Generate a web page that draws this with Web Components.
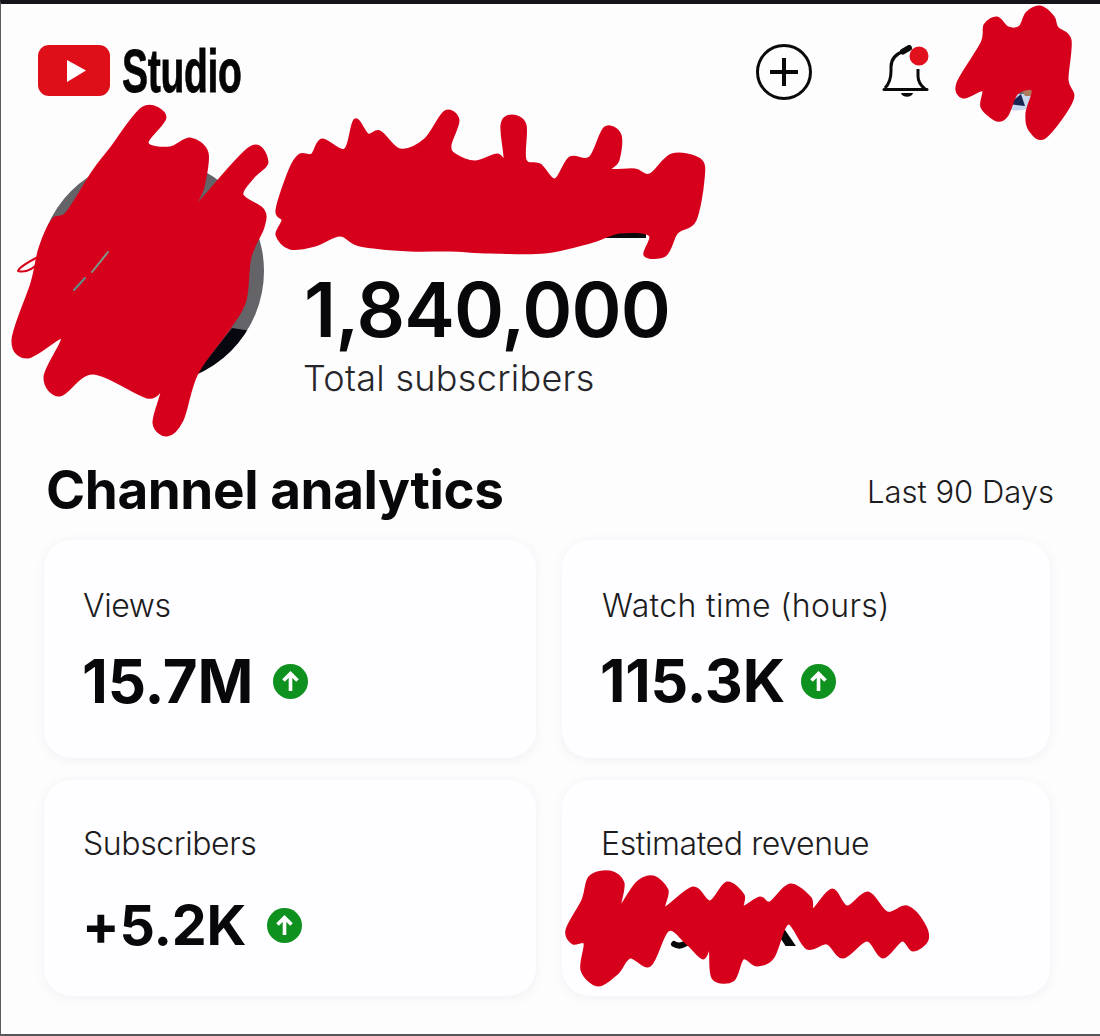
<!DOCTYPE html>
<html lang="en">
<head>
<meta charset="utf-8">
<title>YouTube Studio</title>
<style>
  html, body { margin: 0; background: #fefdfe; }
  body { font-family: Inter, "Liberation Sans", sans-serif; color: #0a0a0c; }
  .lower { --pad-top: 42px; --value-gap: 23px; }
  .wide { --label-track: .35px; --label-left: 1px; }
</style>
</head>
<body>
<studio-app>
  <studio-header></studio-header>
  <channel-summary count="1,840,000" label="Total subscribers"></channel-summary>
  <analytics-panel heading="Channel analytics" range="Last 90 Days">
    <metric-card label="Views" value="15.7M" size="60" gap="20" trend></metric-card>
    <metric-card class="wide" label="Watch time (hours)" value="115.3K" size="59" gap="16" trend></metric-card>
    <metric-card class="lower" label="Subscribers" value="+5.2K" size="55.5" gap="21" trend></metric-card>
    <metric-card class="lower" label="Estimated revenue" value="K" size="59" covered></metric-card>
  </analytics-panel>
  <ink-overlay></ink-overlay>
</studio-app>

<script>
  class StudioApp extends HTMLElement {
    constructor() {
      super();
      this.attachShadow({ mode: 'open' });
      this.shadowRoot.innerHTML = `<style>
        :host {
          display: flex; flex-direction: column; position: relative;
          width: 1100px; height: 1036px; box-sizing: border-box; overflow: hidden;
          border-top: 4px solid #17151a; border-left: 1px solid #5c5c60;
          border-bottom: 2px solid #56565a; background: #fefdfe;
        }
      </style><slot></slot>`;
    }
  }

  class StudioHeader extends HTMLElement {
    constructor() {
      super();
      this.attachShadow({ mode: 'open' });
      this.shadowRoot.innerHTML = `<style>
        :host { display: flex; align-items: flex-start; height: 116px; padding: 41px 0 0 37px; box-sizing: border-box; }
        .logo { display: flex; width: 72px; height: 51px; flex: none; }
        .word {
          font: 700 62px/52px "Liberation Sans", sans-serif; color: #050505; margin-left: 12px;
          width: 120px; transform: scaleX(.63); transform-origin: 0 50%; letter-spacing: -.5px;
          -webkit-text-stroke: .8px #050505;
        }
        .actions { margin-left: auto; display: flex; align-items: flex-start; }
        .add { margin: -3px 0 0 0; }
        .bell { margin: 0 0 0 69px; }
        .avatar { margin: -11px 49px 0 49px; }
      </style>
      <svg class="logo" viewBox="0 0 72 51">
        <rect width="72" height="51" rx="11" fill="#df0f1a"/>
        <path d="M29 15 L48 25.500 L29 37 Z" fill="#fff"/>
      </svg>
      <span class="word">Studio</span>
      <div class="actions">
        <svg class="add" width="58" height="60" viewBox="0 0 58 60">
          <circle cx="29" cy="30" r="26.500" fill="none" stroke="#0a0a0a" stroke-width="3"/>
          <path d="M29 16 V44 M15 30 H43" stroke="#0a0a0a" stroke-width="4" fill="none"/>
        </svg>
        <svg class="bell" width="48" height="54" viewBox="0 0 48 54">
          <path d="M3 43 C8 38 9 33 9 26 V22 C9 14 14 9 21 6.500" fill="none" stroke="#0a0a0a" stroke-width="3"/>
          <path d="M21 6.500 L27 3" stroke="#0a0a0a" stroke-width="6" stroke-linecap="round" fill="none"/>
          <path d="M36 24 V31 C36 36 38 40 43 44" fill="none" stroke="#0a0a0a" stroke-width="3"/>
          <path d="M2 44.500 H45" stroke="#0a0a0a" stroke-width="3" stroke-linecap="round"/>
          <path d="M19 48 H31 C30 53 20 53 19 48 Z" fill="#0a0a0a"/>
          <circle cx="37" cy="11" r="9.500" fill="#e0101c"/>
        </svg>
        <svg class="avatar" width="72" height="80" viewBox="0 0 72 80">
          <circle cx="36" cy="42" r="33" fill="#6a6a6e"/>
          <path d="M22 74 L32 60 H52 L56 72 Q40 80 22 74 Z" fill="#c9d8ee"/>
          <path d="M30 70 L42 60 L46 72 Z" fill="#1a2450"/>
          <path d="M42 54 H60 L54 62 H46 Z" fill="#b07a5c"/>
        </svg>
      </div>`;
    }
  }

  class ChannelSummary extends HTMLElement {
    constructor() {
      super();
      this.attachShadow({ mode: 'open' });
      this.shadowRoot.innerHTML = `<style>
        :host { display: flex; align-items: flex-start; height: 326px; padding: 45px 0 0 36px; box-sizing: border-box; }
        .photo { flex: none; width: 228px; height: 228px; margin-top: -8px; }
        .info { display: flex; flex-direction: column; margin-left: 39px; }
        .name { width: 293px; height: 10px; margin: 63px 0 0 49px; background: #0a0a0c; }
        .count { font: 600 76px/80px Inter, "Liberation Sans", sans-serif; color: #08080a; margin-top: 31px; letter-spacing: -.9px; }
        .label { font: 300 36px/44px Inter, "Liberation Sans", sans-serif; color: #26262a; margin: 7px 0 0 -1px; letter-spacing: .3px; }
      </style>
      <svg class="photo" viewBox="0 0 228 228">
        <circle cx="114" cy="114" r="113" fill="#646367"/>
        <clipPath id="round"><circle cx="114" cy="114" r="113"/></clipPath>
        <path d="M150 228 L195 171 L228 176 V228 Z" fill="#07070f" clip-path="url(#round)"/>
      </svg>
      <div class="info">
        <div class="name"></div>
        <span class="count"></span>
        <span class="label"></span>
      </div>`;
      this.shadowRoot.querySelector('.count').textContent = this.getAttribute('count');
      this.shadowRoot.querySelector('.label').textContent = this.getAttribute('label');
    }
  }

  class AnalyticsPanel extends HTMLElement {
    constructor() {
      super();
      this.attachShadow({ mode: 'open' });
      this.shadowRoot.innerHTML = `<style>
        :host { display: block; padding: 0 46px 0 43px; }
        .head { display: flex; justify-content: space-between; align-items: flex-start; box-sizing: border-box; padding: 4px 0 0 2px; height: 94px; }
        h2 { margin: 0; font: 700 53px/80px Inter, "Liberation Sans", sans-serif; letter-spacing: -.4px; color: #08080a; }
        .range { font: 300 31px/40px Inter, "Liberation Sans", sans-serif; color: #1c1c20; margin-top: 22px; }
        .grid { display: grid; grid-template-columns: 492px 488px; grid-template-rows: 218px 216px; column-gap: 26px; row-gap: 22px; }
      </style>
      <div class="head"><h2></h2><span class="range"></span></div>
      <div class="grid"><slot></slot></div>`;
      this.shadowRoot.querySelector('h2').textContent = this.getAttribute('heading');
      this.shadowRoot.querySelector('.range').textContent = this.getAttribute('range');
    }
  }

  class MetricCard extends HTMLElement {
    constructor() {
      super();
      this.attachShadow({ mode: 'open' });
      this.shadowRoot.innerHTML = `<style>
        :host {
          display: flex; flex-direction: column; box-sizing: border-box;
          padding: var(--pad-top, 44px) 0 0 39px;
          background: #fefdff; border-radius: 28px;
          box-shadow: 0 2px 10px 2px rgba(60, 50, 80, .05);
        }
        .label {
          font: 300 32px/44px Inter, "Liberation Sans", sans-serif; color: #1c1c20;
          letter-spacing: var(--label-track, -.4px); margin-left: var(--label-left, 0);
        }
        .row { display: flex; align-items: center; margin: var(--value-gap, 17px) 0 0 -1px; height: 72px; }
        .value { font: 700 59px/72px Inter, "Liberation Sans", sans-serif; color: #08080a; letter-spacing: -.2px; }
      </style>
      <span class="label"></span>
      <div class="row"><span class="value"></span></div>`;
      const root = this.shadowRoot;
      root.querySelector('.label').textContent = this.getAttribute('label');
      const value = root.querySelector('.value');
      value.textContent = this.getAttribute('value');
      value.style.fontSize = this.getAttribute('size') + 'px';
      if (this.hasAttribute('trend')) {
        const badge = document.createElement('trend-badge');
        badge.style.marginLeft = this.getAttribute('gap') + 'px';
        root.querySelector('.row').appendChild(badge);
      }
      if (this.hasAttribute('covered')) {
        // only the tail of the figure shows from under the ink
        value.style.marginLeft = '155px';
      }
    }
  }

  class TrendBadge extends HTMLElement {
    constructor() {
      super();
      this.attachShadow({ mode: 'open' });
      this.shadowRoot.innerHTML = `<style>
        :host { display: inline-flex; width: 35px; height: 35px; }
      </style>
      <svg width="35" height="35" viewBox="0 0 35 35">
        <circle cx="17.500" cy="17.500" r="17.500" fill="#0f9120"/>
        <path d="M17.500 27 V10 M10.500 16.500 L17.500 9.500 L24.500 16.500" fill="none" stroke="#fff" stroke-width="3.600"/>
      </svg>`;
    }
  }

  // the red marker scribbled on top of the screenshot, traced from the outline
  const INK = {
    photo: '197 205 203 187 207 153 190 139 170 148 147 143 165 117 143 108 110 150 93 172 67 213 53 220 40 248 32 283 13 340 28 357 62 338 45 377 60 395 93 373 147 397 162 390 154 423 167 435 182 420 197 373 230 327 245 300 250 257 263 227 263 210 242 195 253 177 267 162 250 148',
    name: '277 210 290 170 300 155 312 155 322 140 345 150 355 120 368 135 380 132 400 150 425 140 445 112 458 120 450 145 455 155 475 162 497 155 505 160 502 125 512 116 525 125 525 160 540 165 555 180 570 158 590 158 605 128 620 135 618 160 610 170 635 170 650 175 672 155 700 160 703 180 695 220 680 230 675 235 665 255 645 255 650 235 620 232 590 242 545 252 490 252 450 250 410 250 360 245 340 235 315 245 290 248 277 235 283 220',
    corner: '1017 93 1033 90 1027 113 1030 130 1045 137 1072 100 1067 80 1070 40 1057 28 1053 17 1040 7 1027 13 1020 27 1008 28 997 18 985 25 982 43 958 83 963 97 983 90 982 107 997 120 1007 115',
    revenue: '567 930 583 900 590 877 610 872 623 883 620 907 637 883 653 877 667 890 665 908 693 888 710 902 727 883 743 895 743 907 760 898 770 903 790 885 810 898 813 910 832 890 847 907 868 893 887 913 907 907 923 923 927 940 913 950 902 940 883 957 867 940 843 957 827 943 807 948 788 923 773 957 757 965 743 958 733 980 713 978 710 947 703 958 687 943 668 930 650 965 630 957 617 973 598 985 582 970 585 943 573 943'
  };

  // closed curve through the traced points, marker strokes have no corners
  function smoothOutline(list) {
    const n = list.split(' ').map(Number);
    const pts = [];
    for (let i = 0; i < n.length; i += 2) pts.push([n[i], n[i + 1]]);
    const at = i => pts[(i + pts.length) % pts.length];
    let d = `M${pts[0][0]} ${pts[0][1]}`;
    pts.forEach((p, i) => {
      const a = at(i - 1), b = at(i + 1), c = at(i + 2);
      d += ` C${p[0] + (b[0] - a[0]) / 6} ${p[1] + (b[1] - a[1]) / 6} ${b[0] - (c[0] - p[0]) / 6} ${b[1] - (c[1] - p[1]) / 6} ${b[0]} ${b[1]}`;
    });
    return d + ' Z';
  }

  class InkOverlay extends HTMLElement {
    constructor() {
      super();
      this.attachShadow({ mode: 'open' });
      this.shadowRoot.innerHTML = `<style>
        :host { position: absolute; left: -1px; top: -4px; width: 1100px; height: 1036px; pointer-events: none; }
      </style>
      <svg width="1100" height="1036" viewBox="0 0 1100 1036" fill="#d7001c" stroke="#d7001c" stroke-width="3" stroke-linecap="round" stroke-linejoin="round">
        <path d="M674 944 Q682 949 692 938" stroke="#08080a" stroke-width="6" fill="none"/>
        <path d="${smoothOutline(INK.photo)}"/>
        <path d="${smoothOutline(INK.name)}"/>
        <path d="${smoothOutline(INK.corner)}"/>
        <path d="${smoothOutline(INK.revenue)}"/>
        <path d="M40 256 Q20 266 18 271 Q28 274 40 262" stroke-width="2" fill="none"/>
        <path d="M108 252 L92 272" stroke="#7a9a8a" stroke-width="2"/>
        <path d="M85 278 L74 290" stroke="#5f8f8a" stroke-width="2"/>
      </svg>`;
    }
  }

  customElements.define('studio-app', StudioApp);
  customElements.define('studio-header', StudioHeader);
  customElements.define('channel-summary', ChannelSummary);
  customElements.define('analytics-panel', AnalyticsPanel);
  customElements.define('trend-badge', TrendBadge);
  customElements.define('metric-card', MetricCard);
  customElements.define('ink-overlay', InkOverlay);
</script>
</body>
</html>
